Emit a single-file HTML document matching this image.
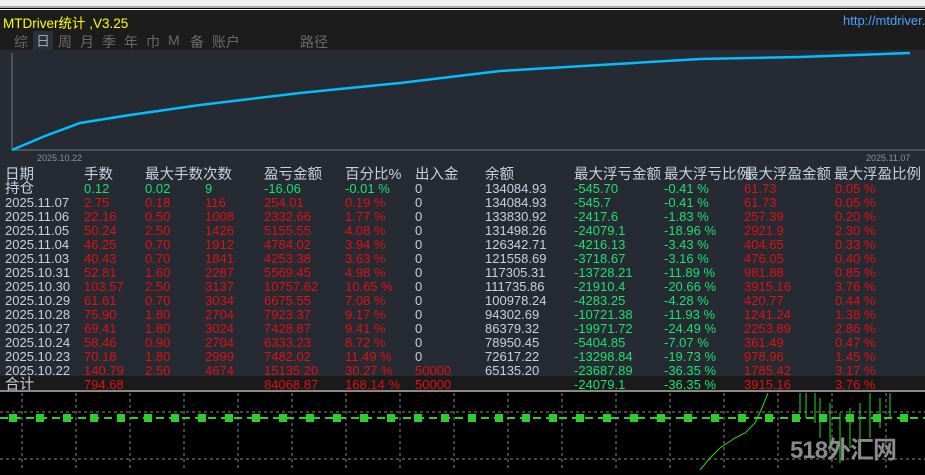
<!DOCTYPE html>
<html><head><meta charset="utf-8"><style>
*{margin:0;padding:0;box-sizing:border-box}
body{width:925px;height:470px;overflow:hidden;background:#000;font-family:"Liberation Sans","Noto Sans CJK SC",sans-serif;position:relative}
.top{position:absolute;left:0;top:0;width:925px;height:8px;background:#efefef;border-bottom:2px solid #aaa}
.hdr{position:absolute;left:0;top:9px;width:925px;height:41px;background:#1c1c1c;border-top:1px solid #fff}
.title{position:absolute;left:3px;top:2px;color:#ffff00;font-size:13.5px}
.url{position:absolute;left:843px;top:3px;color:#4aa3ff;font-size:13px;white-space:nowrap}
.tabs{position:absolute;left:14px;top:22px;color:#6a6a6a;font-size:14px;letter-spacing:0}
.tabs span{position:absolute;white-space:nowrap}
.panel{position:absolute;left:0;top:50px;width:925px;height:326px;background:#252a33}
.r{position:absolute;left:0;width:925px;height:14px;font-size:13px;line-height:14px}
.r span{position:absolute;top:0;white-space:nowrap}
.h{font-size:14.5px}
.w{color:#c8d2de}.g{color:#19e36a}.d{color:#e31010}.b{color:#c8d2de}
.tot{position:absolute;left:0;top:376px;width:925px;height:16px;background:#1a1a1a;border-bottom:2px solid #888}
.chart{position:absolute;left:0;top:393px;width:925px;height:77px;background:#000}
.wm{position:absolute;left:790px;top:430px;color:#8a8a8a;font-size:24px;font-weight:bold;letter-spacing:-1px}
</style></head><body>
<div class="top"></div>
<div class="hdr">
<div class="title">MTDriver统计 ,V3.25</div>
<div class="url">http://mtdriver.</div>
<div class="tabs">
<span style="left:0">综</span>
<span style="top:-1px;background:#2a313c;color:#9aa;padding:0 3px;left:19px">日</span>
<span style="left:44px">周</span><span style="left:66px">月</span><span style="left:88px">季</span><span style="left:110px">年</span><span style="left:132px">巾</span><span style="left:154px">M</span><span style="left:176px">备</span><span style="left:198px">账户</span><span style="left:286px">路径</span>
</div>
</div>
<div class="panel">
<svg width="925" height="120" style="position:absolute;left:0;top:0">
<line x1="12" y1="3" x2="12" y2="100" stroke="#777" stroke-width="1"/>
<line x1="12" y1="100" x2="925" y2="100" stroke="#777" stroke-width="1"/>
<polyline points="12,100 45,86 80,73 130,65 200,55 300,43 400,33 500,21 600,15 700,9 800,7 910,3" fill="none" stroke="#00bfff" stroke-width="2.5"/>
<text x="37" y="111" fill="#8a919c" font-size="9" font-family="Liberation Sans">2025.10.22</text>
<text x="866" y="111" fill="#8a919c" font-size="9" font-family="Liberation Sans">2025.11.07</text>
</svg>
</div>
<div class="tot"></div>

<div class="r w h" style="top:168px"><span style="left:5px">日期</span><span style="left:84px">手数</span><span style="left:145px">最大手数次数</span><span style="left:264px">盈亏金额</span><span style="left:345px">百分比%</span><span style="left:415px">出入金</span><span style="left:485px">余额</span><span style="left:574px">最大浮亏金额</span><span style="left:664px">最大浮亏比例</span><span style="left:744px">最大浮盈金额</span><span style="left:834px">最大浮盈比例</span></div>

<div class="r" style="top:182px"><span class="w h" style="left:5px">持仓</span><span class="g" style="left:84px">0.12</span><span class="g" style="left:145px">0.02</span><span class="g" style="left:205px">9</span><span class="g" style="left:264px">-16.06</span><span class="g" style="left:345px">-0.01 %</span><span class="b" style="left:415px">0</span><span class="b" style="left:485px">134084.93</span><span class="g" style="left:574px">-545.70</span><span class="g" style="left:664px">-0.41 %</span><span class="d" style="left:744px">61.73</span><span class="d" style="left:835px">0.05 %</span></div>

<div class="r" style="top:196px"><span class="w" style="left:5px">2025.11.07</span><span class="d" style="left:84px">2.75</span><span class="d" style="left:145px">0.18</span><span class="d" style="left:205px">116</span><span class="d" style="left:264px">254.01</span><span class="d" style="left:345px">0.19 %</span><span class="b" style="left:415px">0</span><span class="b" style="left:485px">134084.93</span><span class="g" style="left:574px">-545.7</span><span class="g" style="left:664px">-0.41 %</span><span class="d" style="left:744px">61.73</span><span class="d" style="left:835px">0.05 %</span></div>

<div class="r" style="top:210px"><span class="w" style="left:5px">2025.11.06</span><span class="d" style="left:84px">22.16</span><span class="d" style="left:145px">0.50</span><span class="d" style="left:205px">1008</span><span class="d" style="left:264px">2332.66</span><span class="d" style="left:345px">1.77 %</span><span class="b" style="left:415px">0</span><span class="b" style="left:485px">133830.92</span><span class="g" style="left:574px">-2417.6</span><span class="g" style="left:664px">-1.83 %</span><span class="d" style="left:744px">257.39</span><span class="d" style="left:835px">0.20 %</span></div>

<div class="r" style="top:224px"><span class="w" style="left:5px">2025.11.05</span><span class="d" style="left:84px">50.24</span><span class="d" style="left:145px">2.50</span><span class="d" style="left:205px">1426</span><span class="d" style="left:264px">5155.55</span><span class="d" style="left:345px">4.08 %</span><span class="b" style="left:415px">0</span><span class="b" style="left:485px">131498.26</span><span class="g" style="left:574px">-24079.1</span><span class="g" style="left:664px">-18.96 %</span><span class="d" style="left:744px">2921.9</span><span class="d" style="left:835px">2.30 %</span></div>

<div class="r" style="top:238px"><span class="w" style="left:5px">2025.11.04</span><span class="d" style="left:84px">46.25</span><span class="d" style="left:145px">0.70</span><span class="d" style="left:205px">1912</span><span class="d" style="left:264px">4784.02</span><span class="d" style="left:345px">3.94 %</span><span class="b" style="left:415px">0</span><span class="b" style="left:485px">126342.71</span><span class="g" style="left:574px">-4216.13</span><span class="g" style="left:664px">-3.43 %</span><span class="d" style="left:744px">404.65</span><span class="d" style="left:835px">0.33 %</span></div>

<div class="r" style="top:252px"><span class="w" style="left:5px">2025.11.03</span><span class="d" style="left:84px">40.43</span><span class="d" style="left:145px">0.70</span><span class="d" style="left:205px">1841</span><span class="d" style="left:264px">4253.38</span><span class="d" style="left:345px">3.63 %</span><span class="b" style="left:415px">0</span><span class="b" style="left:485px">121558.69</span><span class="g" style="left:574px">-3718.67</span><span class="g" style="left:664px">-3.16 %</span><span class="d" style="left:744px">476.05</span><span class="d" style="left:835px">0.40 %</span></div>

<div class="r" style="top:266px"><span class="w" style="left:5px">2025.10.31</span><span class="d" style="left:84px">52.81</span><span class="d" style="left:145px">1.60</span><span class="d" style="left:205px">2287</span><span class="d" style="left:264px">5569.45</span><span class="d" style="left:345px">4.98 %</span><span class="b" style="left:415px">0</span><span class="b" style="left:485px">117305.31</span><span class="g" style="left:574px">-13728.21</span><span class="g" style="left:664px">-11.89 %</span><span class="d" style="left:744px">981.88</span><span class="d" style="left:835px">0.85 %</span></div>

<div class="r" style="top:280px"><span class="w" style="left:5px">2025.10.30</span><span class="d" style="left:84px">103.57</span><span class="d" style="left:145px">2.50</span><span class="d" style="left:205px">3137</span><span class="d" style="left:264px">10757.62</span><span class="d" style="left:345px">10.65 %</span><span class="b" style="left:415px">0</span><span class="b" style="left:485px">111735.86</span><span class="g" style="left:574px">-21910.4</span><span class="g" style="left:664px">-20.66 %</span><span class="d" style="left:744px">3915.16</span><span class="d" style="left:835px">3.76 %</span></div>

<div class="r" style="top:294px"><span class="w" style="left:5px">2025.10.29</span><span class="d" style="left:84px">61.61</span><span class="d" style="left:145px">0.70</span><span class="d" style="left:205px">3034</span><span class="d" style="left:264px">6675.55</span><span class="d" style="left:345px">7.08 %</span><span class="b" style="left:415px">0</span><span class="b" style="left:485px">100978.24</span><span class="g" style="left:574px">-4283.25</span><span class="g" style="left:664px">-4.28 %</span><span class="d" style="left:744px">420.77</span><span class="d" style="left:835px">0.44 %</span></div>

<div class="r" style="top:308px"><span class="w" style="left:5px">2025.10.28</span><span class="d" style="left:84px">75.90</span><span class="d" style="left:145px">1.80</span><span class="d" style="left:205px">2704</span><span class="d" style="left:264px">7923.37</span><span class="d" style="left:345px">9.17 %</span><span class="b" style="left:415px">0</span><span class="b" style="left:485px">94302.69</span><span class="g" style="left:574px">-10721.38</span><span class="g" style="left:664px">-11.93 %</span><span class="d" style="left:744px">1241.24</span><span class="d" style="left:835px">1.38 %</span></div>

<div class="r" style="top:322px"><span class="w" style="left:5px">2025.10.27</span><span class="d" style="left:84px">69.41</span><span class="d" style="left:145px">1.80</span><span class="d" style="left:205px">3024</span><span class="d" style="left:264px">7428.87</span><span class="d" style="left:345px">9.41 %</span><span class="b" style="left:415px">0</span><span class="b" style="left:485px">86379.32</span><span class="g" style="left:574px">-19971.72</span><span class="g" style="left:664px">-24.49 %</span><span class="d" style="left:744px">2253.89</span><span class="d" style="left:835px">2.86 %</span></div>

<div class="r" style="top:336px"><span class="w" style="left:5px">2025.10.24</span><span class="d" style="left:84px">58.46</span><span class="d" style="left:145px">0.90</span><span class="d" style="left:205px">2704</span><span class="d" style="left:264px">6333.23</span><span class="d" style="left:345px">8.72 %</span><span class="b" style="left:415px">0</span><span class="b" style="left:485px">78950.45</span><span class="g" style="left:574px">-5404.85</span><span class="g" style="left:664px">-7.07 %</span><span class="d" style="left:744px">361.49</span><span class="d" style="left:835px">0.47 %</span></div>

<div class="r" style="top:350px"><span class="w" style="left:5px">2025.10.23</span><span class="d" style="left:84px">70.18</span><span class="d" style="left:145px">1.80</span><span class="d" style="left:205px">2999</span><span class="d" style="left:264px">7482.02</span><span class="d" style="left:345px">11.49 %</span><span class="b" style="left:415px">0</span><span class="b" style="left:485px">72617.22</span><span class="g" style="left:574px">-13298.84</span><span class="g" style="left:664px">-19.73 %</span><span class="d" style="left:744px">978.96</span><span class="d" style="left:835px">1.45 %</span></div>

<div class="r" style="top:364px"><span class="w" style="left:5px">2025.10.22</span><span class="d" style="left:84px">140.79</span><span class="d" style="left:145px">2.50</span><span class="d" style="left:205px">4674</span><span class="d" style="left:264px">15135.20</span><span class="d" style="left:345px">30.27 %</span><span class="d" style="left:415px">50000</span><span class="b" style="left:485px">65135.20</span><span class="g" style="left:574px">-23687.89</span><span class="g" style="left:664px">-36.35 %</span><span class="d" style="left:744px">1785.42</span><span class="d" style="left:835px">3.17 %</span></div>

<div class="r" style="top:378px"><span class="w h" style="left:5px">合计</span><span class="d" style="left:84px">794.68</span><span class="d" style="left:264px">84068.87</span><span class="d" style="left:345px">168.14 %</span><span class="d" style="left:415px">50000</span><span class="g" style="left:574px">-24079.1</span><span class="g" style="left:664px">-36.35 %</span><span class="d" style="left:744px">3915.16</span><span class="d" style="left:835px">3.76 %</span></div>

<div class="chart">
<svg width="925" height="77">
<g stroke="#888" stroke-dasharray="3,3" stroke-width="1">
<line x1="0" y1="19" x2="925" y2="19"/>
<line x1="0" y1="66" x2="925" y2="66"/>
<line x1="22" y1="0" x2="22" y2="77"/><line x1="76" y1="0" x2="76" y2="77"/><line x1="130" y1="0" x2="130" y2="77"/><line x1="184" y1="0" x2="184" y2="77"/><line x1="238" y1="0" x2="238" y2="77"/><line x1="292" y1="0" x2="292" y2="77"/><line x1="346" y1="0" x2="346" y2="77"/><line x1="400" y1="0" x2="400" y2="77"/><line x1="454" y1="0" x2="454" y2="77"/><line x1="508" y1="0" x2="508" y2="77"/><line x1="562" y1="0" x2="562" y2="77"/><line x1="616" y1="0" x2="616" y2="77"/><line x1="670" y1="0" x2="670" y2="77"/><line x1="724" y1="0" x2="724" y2="77"/><line x1="778" y1="0" x2="778" y2="77"/><line x1="832" y1="0" x2="832" y2="77"/><line x1="886" y1="0" x2="886" y2="77"/>
</g>
<line x1="0" y1="25" x2="925" y2="25" stroke="#2ecc2e" stroke-width="2" stroke-dasharray="8,5"/>
<g fill="#2ecc2e">
<rect x="9" y="21" width="8" height="8"/><rect x="36" y="21" width="8" height="8"/><rect x="63" y="21" width="8" height="8"/><rect x="90" y="21" width="8" height="8"/><rect x="117" y="21" width="8" height="8"/><rect x="144" y="21" width="8" height="8"/><rect x="171" y="21" width="8" height="8"/><rect x="198" y="21" width="8" height="8"/><rect x="225" y="21" width="8" height="8"/><rect x="252" y="21" width="8" height="8"/><rect x="279" y="21" width="8" height="8"/><rect x="306" y="21" width="8" height="8"/><rect x="333" y="21" width="8" height="8"/><rect x="360" y="21" width="8" height="8"/><rect x="387" y="21" width="8" height="8"/><rect x="414" y="21" width="8" height="8"/><rect x="441" y="21" width="8" height="8"/><rect x="468" y="21" width="8" height="8"/><rect x="495" y="21" width="8" height="8"/><rect x="522" y="21" width="8" height="8"/><rect x="549" y="21" width="8" height="8"/><rect x="576" y="21" width="8" height="8"/><rect x="603" y="21" width="8" height="8"/><rect x="630" y="21" width="8" height="8"/><rect x="657" y="21" width="8" height="8"/><rect x="684" y="21" width="8" height="8"/><rect x="711" y="21" width="8" height="8"/><rect x="738" y="21" width="8" height="8"/><rect x="765" y="21" width="8" height="8"/><rect x="792" y="21" width="8" height="8"/><rect x="819" y="21" width="8" height="8"/><rect x="846" y="21" width="8" height="8"/><rect x="873" y="21" width="8" height="8"/><rect x="900" y="21" width="8" height="8"/>
</g>
<polyline points="700,77 710,65 720,55 735,45 745,40 755,30 762,15 768,0" fill="none" stroke="#22dd22" stroke-width="1"/>
<g stroke="#22dd22" stroke-width="1">
<line x1="800" y1="0" x2="800" y2="20"/><line x1="806" y1="0" x2="806" y2="25"/><line x1="815" y1="0" x2="815" y2="30"/><line x1="820" y1="5" x2="820" y2="45"/><line x1="830" y1="10" x2="830" y2="60"/><line x1="840" y1="20" x2="840" y2="70"/><line x1="850" y1="15" x2="850" y2="55"/><line x1="860" y1="10" x2="860" y2="60"/><line x1="870" y1="0" x2="870" y2="45"/><line x1="880" y1="5" x2="880" y2="35"/><line x1="890" y1="0" x2="890" y2="25"/>
</g>
</svg>
</div>
<div class="wm">518外汇网</div>
</body></html>
